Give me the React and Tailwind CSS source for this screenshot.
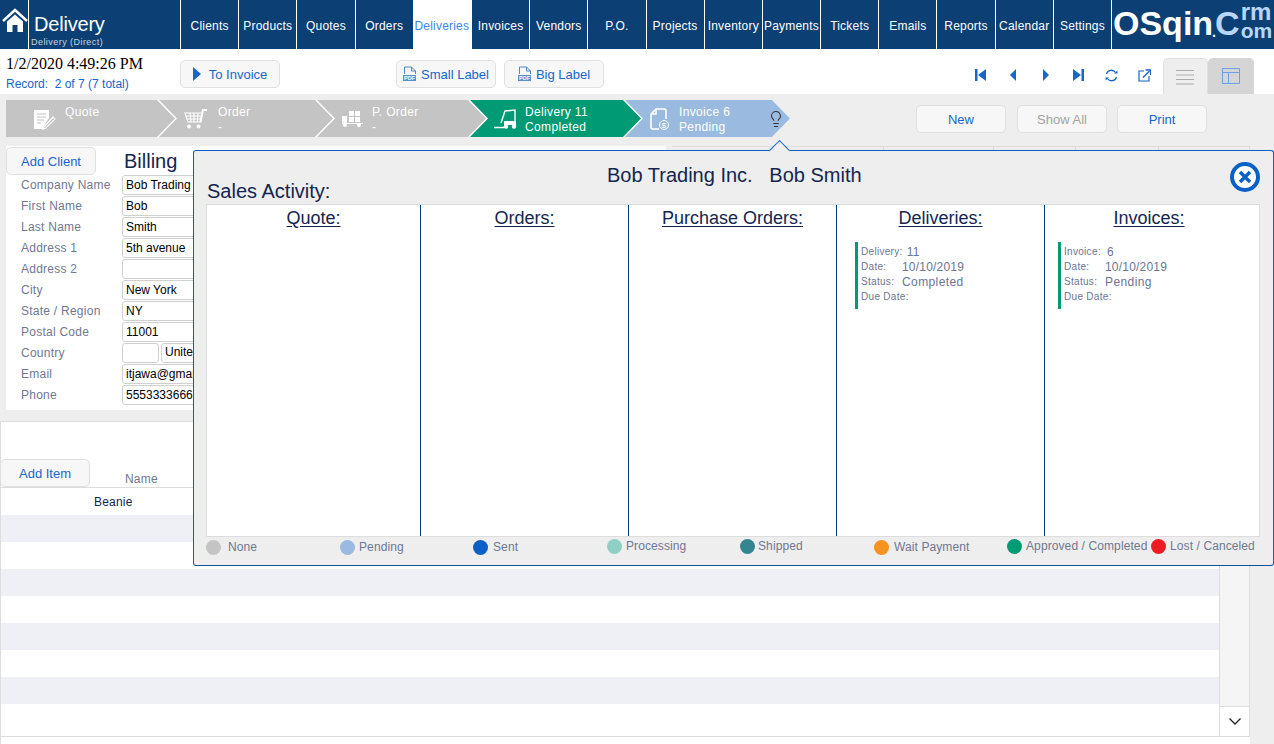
import { Lightbulb } from "lucide-react";

const navItems = ["Clients", "Products", "Quotes", "Orders", "Deliveries", "Invoices", "Vendors", "P.O.", "Projects", "Inventory", "Payments", "Tickets", "Emails", "Reports", "Calendar", "Settings"];

const billing = [
  ["Company Name", "Bob Trading Inc."],
  ["First Name", "Bob"],
  ["Last Name", "Smith"],
  ["Address 1", "5th avenue"],
  ["Address 2", ""],
  ["City", "New York"],
  ["State / Region", "NY"],
  ["Postal Code", "11001"],
  ["Country", null],
  ["Email", "itjawa@gmail.com"],
  ["Phone", "5553333666"],
];

const legend = [
  { name: "None", color: "bg-[#c4c4c4]", item: "w-[134px] gap-[7px]" },
  { name: "Pending", color: "bg-[#9abbdf]", item: "w-[133px] gap-[4px]" },
  { name: "Sent", color: "bg-[#0b60c8]", item: "w-[134px] gap-[5px]" },
  { name: "Processing", color: "bg-[#90d0c4]", item: "w-[133px] gap-[4px] -translate-y-[1px]" },
  { name: "Shipped", color: "bg-[#358590]", item: "w-[134px] gap-[3px] -translate-y-[1px]" },
  { name: "Wait Payment", color: "bg-[#f7931e]", item: "w-[133px] gap-[5px]" },
  { name: "Approved / Completed", color: "bg-[#009a75]", item: "w-[144px] gap-[4px] -translate-y-[1px]" },
  { name: "Lost / Canceled", color: "bg-[#ed1c24]", item: "w-[120px] gap-[4px] -translate-y-[1px]" },
];

const HomeIcon = () => (
  <svg width="26" height="26" viewBox="0 0 26 26" fill="white">
    <path d="M1 13 L13 2 L25 13" fill="none" stroke="white" strokeWidth="2.4" />
    <path d="M5 13.5 L13 6.5 L21 13.5 V24 H15.5 V17 H10.5 V24 H5 Z" />
  </svg>
);

const QuoteIcon = () => (
  <svg width="24" height="24" viewBox="0 0 24 24" fill="none" stroke="white">
    <path d="M2 3 H17 V11 L11 20 V22 H2 Z" fill="white" stroke="none" />
    <path d="M5 7 H14 M5 10 H14 M5 13 H12 M5 16 H9" stroke="#c4c4c4" strokeWidth="1.2" />
    <path d="M12 20 L21 10 L23 12 L14 21 L11 22 Z" fill="#c4c4c4" strokeWidth="1.2" />
  </svg>
);

const CartIcon = () => (
  <svg width="24" height="22" viewBox="0 0 24 22" fill="none" stroke="white" strokeWidth="1.2">
    <path d="M1 5 H18 L16.5 14 H4 Z" />
    <path d="M1.5 8 H17.5 M2.5 11 H17 M6 5 L7 14 M10 5 V14 M14 5 L13.5 14" />
    <path d="M16.5 14 L19 2 H23" strokeWidth="2" />
    <circle cx="5" cy="18.5" r="2" fill="white" stroke="none" />
    <circle cx="14.5" cy="18.5" r="2" fill="white" stroke="none" />
  </svg>
);

const TruckIcon = () => (
  <svg width="24" height="18" viewBox="0 0 24 18" fill="white">
    <path d="M8 1 H13 V6 H8 Z M14 1 H19 V6 H14 Z M8 7 H13 V12 H8 Z M14 7 H19 V12 H14 Z" />
    <path d="M1 6 H6 V13 H1 Z" />
    <path d="M1 13 H22 V14 H1 Z" />
    <circle cx="4" cy="15" r="2" />
    <circle cx="18" cy="15" r="2" />
  </svg>
);

const ForkliftIcon = () => (
  <svg width="24" height="22" viewBox="0 0 24 22" fill="none" stroke="white" strokeWidth="1.4">
    <path d="M7 15 L11 3 L21 2 V14" />
    <path d="M10 13 H22 V17 H10 Z" fill="white" stroke="none" />
    <path d="M0 19.5 H10" strokeWidth="1.6" />
    <circle cx="12" cy="18.5" r="2.2" fill="white" stroke="none" />
    <circle cx="20" cy="18.5" r="2.2" fill="white" stroke="none" />
  </svg>
);

const InvoiceIcon = () => (
  <svg width="20" height="24" viewBox="0 0 20 24" fill="none" stroke="white" strokeWidth="1.6">
    <path d="M9 22 H3 Q1 22 1 20 V7 L6 2 H14 Q16 2 16 4 V12" />
    <path d="M1 7 H6 V2" />
    <circle cx="14" cy="18" r="4.5" strokeWidth="1" />
    <text x="14" y="21" fontSize="8" fill="white" stroke="none" textAnchor="middle" fontFamily="Liberation Sans">$</text>
  </svg>
);

const PdfIcon = () => (
  <svg width="14" height="16" viewBox="0 0 14 16" className="shrink-0">
    <path d="M1.5 8 V1 H8.5 L12.5 5 V8 M8.5 1 V5 H12.5" fill="none" stroke="#4f86c6" />
    <rect x="0" y="9" width="13" height="6" fill="#5b8fcb" />
    <text x="6.5" y="14" fontSize="5.5" fontWeight="700" fill="white" textAnchor="middle" fontFamily="Liberation Sans">PDF</text>
  </svg>
);

const PagerIcon = ({ type }) => (
  <svg width="12" height="14" viewBox="0 0 12 14" fill="#1766cc">
    {type === "first" && <path d="M0 1 H2.5 V13 H0 Z M11 1 V13 L3 7 Z" />}
    {type === "prev" && <path d="M9 1 V13 L3 7 Z" />}
    {type === "next" && <path d="M3 1 V13 L9 7 Z" />}
    {type === "last" && <path d="M1 1 V13 L9 7 Z M9.5 1 H12 V13 H9.5 Z" />}
  </svg>
);

const RefreshIcon = () => (
  <svg width="13" height="13" viewBox="0 0 13 13" fill="none" stroke="#1766cc" strokeWidth="1.3">
    <path d="M1.5 5 A5 5 0 0 1 10.5 3.5" />
    <path d="M11.5 8 A5 5 0 0 1 2.5 9.5" />
    <path d="M9 4.5 H12.5 V1.5 Z M4 8.5 H0.5 V11.5 Z" fill="#1766cc" stroke="none" />
  </svg>
);

const PopoutIcon = () => (
  <svg width="13" height="13" viewBox="0 0 13 13" fill="none" stroke="#1766cc" strokeWidth="1.2">
    <path d="M6 2 H1 V12 H11 V7" />
    <path d="M5 8.5 L11.5 2" strokeWidth="1.5" />
    <path d="M7.5 1 H12.5 V6" strokeWidth="1.3" />
  </svg>
);

const Btn = ({ children, className = "" }) => (
  <div className={`flex h-[28px] items-center justify-center rounded-[5px] border border-[#e0e0e0] bg-[#f7f7f7] text-[13px] leading-none ${className}`}>
    {children}
  </div>
);

const Step = ({ icon, title, sub, shape, bg, iconBox, textBox, children }) => (
  <div className={`-mr-[16px] flex h-[37px] shrink-0 items-stretch text-[12px] tracking-[0.35px] text-white ${shape} ${bg}`}>
    <div className={`flex items-center justify-center ${iconBox}`}>{icon}</div>
    <div className={`flex flex-col pt-[5px] leading-[15px] ${textBox}`}>
      <span>{title}</span>
      <span>{sub}</span>
    </div>
    {children}
  </div>
);

const Card = ({ kind, num, date, status, valueGap, className = "" }) => (
  <div className={`mt-[13px] h-[67px] border-l-[3px] border-[#009a75] pl-[3px] pt-[2px] text-[#6b7594] ${className}`}>
    <div className="flex h-[15px] items-center">
      <span className="text-[10px] tracking-[0.3px]">{kind}:</span>
      <span className={`text-[12px] tracking-[0.3px] ${valueGap}`}>{num}</span>
    </div>
    <div className="flex h-[15px] items-center">
      <span className="w-[41px] text-[10px] tracking-[0.3px]">Date:</span>
      <span className="text-[12px] tracking-[0.2px]">{date}</span>
    </div>
    <div className="flex h-[15px] items-center">
      <span className="w-[41px] text-[10px] tracking-[0.3px]">Status:</span>
      <span className="text-[12px] tracking-[0.4px]">{status}</span>
    </div>
    <div className="flex h-[14px] items-center">
      <span className="text-[10px] tracking-[0.3px]">Due Date:</span>
    </div>
  </div>
);

const Column = ({ title, className = "", children }) => (
  <div className={`shrink-0 border-r border-[#0c4074] pt-[3px] ${className}`}>
    <div className="text-center text-[18px] leading-[21px] text-[#14264f] underline underline-offset-2">{title}</div>
    {children}
  </div>
);

export default function App() {
  return (
    <div className="relative flex h-[744px] w-[1274px] flex-col overflow-hidden bg-[#eeeeee] font-['Liberation_Sans',Arial,sans-serif]">
      {/* top nav */}
      <div className="flex h-[49px] shrink-0 bg-[#0c4074] text-white">
        <div className="flex w-[29px] items-start justify-center border-r border-white pl-[1px] pt-[8px]">
          <HomeIcon />
        </div>
        <div className="w-[151px] pl-[5px] pt-[13px]">
          <div className="text-[20px] leading-[22px] tracking-[-0.2px]">Delivery</div>
          <div className="mt-[2px] -ml-[3px] text-[9px] leading-[10px] tracking-[0.45px] text-[#c9d3de]">Delivery (Direct)</div>
        </div>
        {navItems.map((item) => (
          <div
            key={item}
            className={
              item === "Deliveries"
                ? "flex w-[58.19px] shrink-0 items-center justify-center bg-white pt-[3px] text-[12px] tracking-[0.2px] text-[#3d85ee]"
                : "flex w-[58.19px] shrink-0 items-center justify-center border-l border-white pt-[3px] text-[12px] tracking-[0.2px]"
            }
          >
            {item}
          </div>
        ))}
        <div className="flex items-start border-l border-white pl-[1px] font-bold">
          <span className="mt-[4px] text-[34px] leading-[38px]">OSqin</span>
          <span className="-ml-[1px] mt-[24px] w-[3px] text-[14px] leading-[16px]">.</span>
          <span className="mt-[4px] text-[34px] leading-[38px] text-[#b9d6fa]">C</span>
          <div className="ml-[1px] flex flex-col text-[#b9d6fa]">
            <span className="mt-[2px] text-[24px] leading-[20px]">rm</span>
            <span className="text-[21px] leading-[18px]">om</span>
          </div>
        </div>
      </div>

      {/* toolbar */}
      <div className="flex h-[45px] shrink-0 bg-white">
        <div className="w-[180px] pl-[6px] pt-[7px]">
          <div className="font-['Liberation_Serif',serif] text-[16px] leading-[16px] text-black">1/2/2020 4:49:26 PM</div>
          <div className="mt-[5px] text-[12px] leading-[14px] text-[#1766cc]">Record:&nbsp; 2 of 7 (7 total)</div>
        </div>
        <Btn className="mt-[11px] w-[100px] gap-[8px] text-[#1766cc]">
          <svg width="8" height="14" viewBox="0 0 8 14" fill="#1766cc">
            <path d="M0 0 L8 7 L0 14 Z" />
          </svg>
          To Invoice
        </Btn>
        <Btn className="ml-[116px] mt-[11px] w-[100px] gap-[4px] text-[#1766cc]">
          <PdfIcon />
          Small Label
        </Btn>
        <Btn className="ml-[8px] mt-[11px] w-[100px] gap-[4px] text-[#1766cc]">
          <PdfIcon />
          Big Label
        </Btn>
        <div className="ml-[371px] mt-[19px] flex h-[14px] items-center gap-[20.4px]">
          <PagerIcon type="first" />
          <PagerIcon type="prev" />
          <PagerIcon type="next" />
          <PagerIcon type="last" />
          <RefreshIcon />
          <PopoutIcon />
        </div>
        <div className="ml-[12px] mt-[9px] flex h-[36px] w-[45px] items-center justify-center rounded-t-[5px] border border-b-0 border-[#e0e0e0] bg-[#eeeeee]">
          <svg width="18" height="16" viewBox="0 0 18 16" stroke="#aaaaaa">
            <path d="M0 1.5 H18 M0 6 H18 M0 10.5 H18 M0 15 H18" />
          </svg>
        </div>
        <div className="mt-[9px] flex h-[36px] w-[46px] items-center justify-center rounded-t-[5px] bg-[#d5d5d5]">
          <svg width="18" height="16" viewBox="0 0 18 16" fill="none" stroke="#6f9fe0">
            <path d="M0.5 0.5 H17.5 V15.5 H0.5 Z M0.5 4.5 H17.5 M6.5 4.5 V15.5" />
          </svg>
        </div>
      </div>

      {/* steps + actions */}
      <div className="flex h-[52px] shrink-0 pl-[6px] pt-[6px]">
        <div className="flex h-[37px] w-[784px] overflow-hidden bg-white [clip-path:polygon(0_0,766px_0,784px_50%,766px_100%,0_100%)]">
          <Step
            icon={<QuoteIcon />}
            title="Quote"
            sub=""
            bg="bg-[#c4c4c4]"
            shape="w-[169px] [clip-path:polygon(0_0,151px_0,169px_50%,151px_100%,0_100%)]"
            iconBox="w-[59px] pl-[17px]"
            textBox=""
          />
          <Step
            icon={<CartIcon />}
            title="Order"
            sub="-"
            bg="bg-[#c4c4c4]"
            shape="w-[174px] [clip-path:polygon(0_0,156px_0,174px_50%,156px_100%,0_100%,18px_50%)]"
            iconBox="w-[59px] pl-[15px]"
            textBox=""
          />
          <Step
            icon={<TruckIcon />}
            title="P. Order"
            sub="-"
            bg="bg-[#c4c4c4]"
            shape="w-[169px] [clip-path:polygon(0_0,151px_0,169px_50%,151px_100%,0_100%,18px_50%)]"
            iconBox="w-[55px] pl-[16px]"
            textBox=""
          />
          <Step
            icon={<ForkliftIcon />}
            title="Delivery 11"
            sub="Completed"
            bg="bg-[#009a75]"
            shape="w-[171px] [clip-path:polygon(0_0,153px_0,171px_50%,153px_100%,0_100%,18px_50%)]"
            iconBox="w-[55px] pl-[16px]"
            textBox=""
          />
          <Step
            icon={<InvoiceIcon />}
            title="Invoice 6"
            sub="Pending"
            bg="bg-[#9abbdf]"
            shape="w-[167px] [clip-path:polygon(0_0,149px_0,167px_50%,149px_100%,0_100%,18px_50%)]"
            iconBox="w-[54px] pl-[16px]"
            textBox="w-[88px]"
          >
            <div className="flex items-center">
              <Lightbulb size={18} strokeWidth={1.4} className="text-[#333333]" />
            </div>
          </Step>
        </div>
        <Btn className="ml-[126px] mt-[5px] w-[90px] text-[#1766cc]">New</Btn>
        <Btn className="ml-[11px] mt-[5px] w-[90px] text-[#a3a3a3]">Show All</Btn>
        <Btn className="ml-[10px] mt-[5px] w-[90px] text-[#1766cc]">Print</Btn>
      </div>

      {/* billing */}
      <div className="flex h-[275px] shrink-0 items-start pl-[6px]">
        <div className="h-[264px] w-[660px] bg-white">
          <div className="flex h-[28px] items-start">
            <Btn className="mt-[1px] w-[90px] text-[#1766cc]">Add Client</Btn>
            <span className="ml-[28px] mt-[3px] text-[20px] leading-[24px] text-[#14264f]">Billing</span>
          </div>
          <div className="flex flex-col">
            {billing.map(([label, value]) => (
              <div key={label} className="flex h-[21px] items-center">
                <span className="ml-[15px] w-[101px] text-[12px] tracking-[0.25px] text-[#6f7892]">{label}</span>
                {value === null ? (
                  <div className="flex gap-[2px]">
                    <div className="h-[20px] w-[37px] rounded-[3px] border border-[#d0d0d0]" />
                    <div className="h-[20px] w-[200px] rounded-[3px] border border-[#d0d0d0] pl-[3px] text-[12px] leading-[16px] text-black">United States</div>
                  </div>
                ) : (
                  <div className="h-[20px] w-[240px] rounded-[3px] border border-[#d0d0d0] pl-[3px] text-[12px] leading-[18px] text-black">{value}</div>
                )}
              </div>
            ))}
          </div>
        </div>
        <div className="ml-[6px] flex h-[4px] w-[578px] border-t border-[#dddddd]">
          <div className="w-[212px] border-r border-[#dddddd]" />
          <div className="w-[110px] border-r border-[#dddddd]" />
          <div className="w-[82px] border-r border-[#dddddd]" />
          <div className="w-[83px] border-r border-[#dddddd]" />
          <div className="w-[91px] border-r border-[#dddddd]" />
        </div>
      </div>

      {/* items table */}
      <div className="flex h-[323px] w-[1250px] shrink-0 flex-col border-l border-t border-[#dddddd] bg-white">
        <div className="flex h-[66px] shrink-0 items-end border-b border-[#dddddd]">
          <Btn className="-ml-[1px] w-[90px] text-[#1766cc]">Add Item</Btn>
          <span className="-mb-[1px] ml-[35px] text-[12px] tracking-[0.2px] text-[#6f7892]">Name</span>
        </div>
        <div className="flex h-[249px] shrink-0 border-b border-[#dddddd]">
          <div className="w-[1218px]">
            <div className="flex h-[27px] items-center pl-[93px] text-[12px] tracking-[0.2px] text-[#14264f]">Beanie</div>
            {[0, 1, 2, 3, 4, 5, 6, 7].map((n) => (
              <div key={n} className={n % 2 === 0 ? "h-[27px] bg-[#eff0f5]" : "h-[27px] bg-white"} />
            ))}
          </div>
          <div className="flex w-[31px] flex-col border-x border-[#dddddd] bg-[#f5f5f5]">
            <div className="flex-1" />
            <div className="flex h-[30px] items-center justify-center border-t border-[#dddddd] bg-white">
              <svg width="12" height="7" viewBox="0 0 12 7" fill="none" stroke="#222222" strokeWidth="1.3">
                <path d="M0.5 0.5 L6 6 L11.5 0.5" />
              </svg>
            </div>
          </div>
        </div>
      </div>

      {/* sales activity popup */}
      <div className="absolute left-[193px] top-[150px] h-[416px] w-[1081px] rounded-[3px] border border-[#0b60c8] border-b-[#0c50a0] bg-[#eeeeee] pl-[12px]">
        <div className="absolute -top-[8px] left-[578px] h-[15px] w-[15px] rotate-45 border-l border-t border-[#0b60c8] bg-[#eeeeee]" />
        <div className="relative flex h-[53px]">
          <span className="mt-[29px] ml-[1px] text-[20px] leading-[23px] text-[#14264f]">Sales Activity:</span>
          <span className="absolute left-[401px] top-[13px] whitespace-pre text-[20px] leading-[23px] text-[#14264f]">Bob Trading Inc.   Bob Smith</span>
          <svg width="30" height="30" viewBox="0 0 30 30" className="absolute left-[1024px] top-[11px]">
            <circle cx="15" cy="15" r="13" fill="white" stroke="#0b60c8" strokeWidth="4" />
            <path d="M10 10 L20 20 M20 10 L10 20" stroke="#0b60c8" strokeWidth="3.4" />
          </svg>
        </div>
        <div className="flex h-[333px] w-[1054px] border border-[#dddddd] bg-white">
          <Column title="Quote:" className="w-[214px]" />
          <Column title="Orders:" className="w-[208px]" />
          <Column title="Purchase Orders:" className="w-[208px]" />
          <Column title="Deliveries:" className="w-[208px]">
            <Card kind="Delivery" num="11" date="10/10/2019" status="Completed" valueGap="ml-[4px]" className="ml-[18px]" />
          </Column>
          <div className="w-[208px] pt-[3px]">
            <div className="text-center text-[18px] leading-[21px] text-[#14264f] underline underline-offset-2">Invoices:</div>
            <Card kind="Invoice" num="6" date="10/10/2019" status="Pending" valueGap="ml-[6px]" className="ml-[13px]" />
          </div>
        </div>
        <div className="flex h-[20px] items-center">
          {legend.map((l) => (
            <div key={l.name} className={`flex shrink-0 items-center ${l.item}`}>
              <span className={`h-[15px] w-[15px] shrink-0 rounded-full ${l.color}`} />
              <span className="whitespace-nowrap text-[12px] tracking-[0.1px] text-[#6f7892]">{l.name}</span>
            </div>
          ))}
        </div>
      </div>
    </div>
  );
}
